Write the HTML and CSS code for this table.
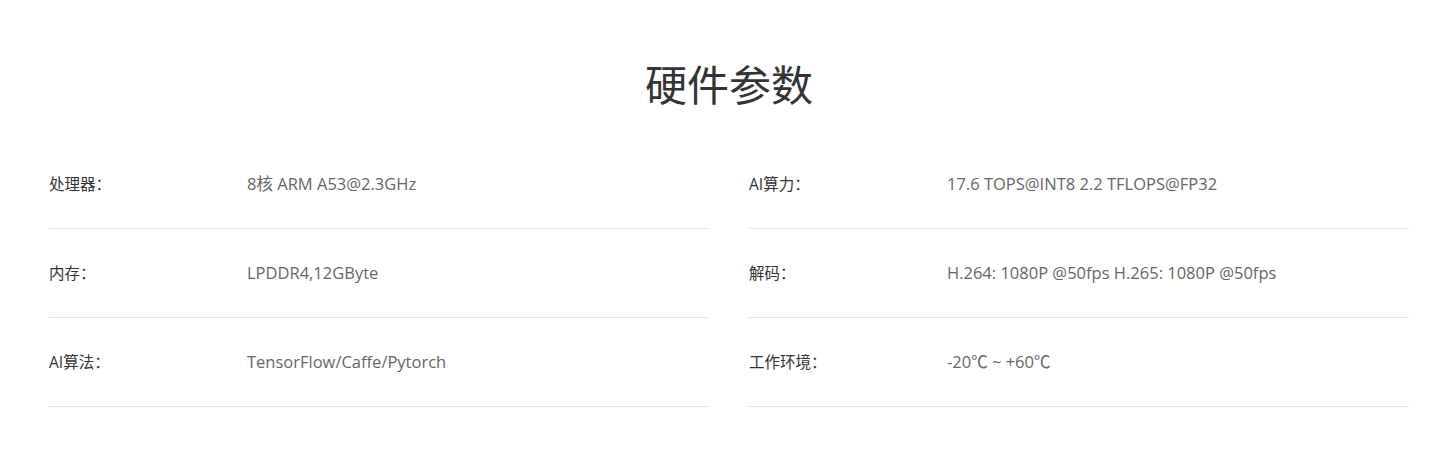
FILE: index.html
```html
<!DOCTYPE html>
<html lang="zh-CN">
<head>
<meta charset="utf-8">
<title>硬件参数</title>
<link rel="stylesheet" href="styles.css">
</head>
<body>
<section class="specs">
  <h2 class="specs-title">硬件参数</h2>
  <div class="specs-grid">
    <div class="spec-row"><span class="spec-label">处理器：</span><span class="spec-value">8核 ARM A53@2.3GHz</span></div>
    <div class="spec-row"><span class="spec-label">AI算力：</span><span class="spec-value">17.6 TOPS@INT8 2.2 TFLOPS@FP32</span></div>
    <div class="spec-row"><span class="spec-label">内存：</span><span class="spec-value">LPDDR4,12GByte</span></div>
    <div class="spec-row"><span class="spec-label">解码：</span><span class="spec-value">H.264: 1080P @50fps H.265: 1080P @50fps</span></div>
    <div class="spec-row"><span class="spec-label">AI算法：</span><span class="spec-value">TensorFlow/Caffe/Pytorch</span></div>
    <div class="spec-row"><span class="spec-label">工作环境：</span><span class="spec-value">-20℃ ~ +60℃</span></div>
  </div>
</section>
</body>
</html>
```

FILE: styles.css
```css
html, body {
  margin: 0;
  padding: 0;
  background: #fff;
}
body {
  font-family: "Open Sans", "Noto Sans CJK SC", sans-serif;
  color: #333;
}
.specs {
  width: 1360px;
  margin-left: 49px;
  padding-top: 53px;
}
.specs-title {
  margin: 0 0 27px;
  text-align: center;
  font-family: "Noto Sans CJK SC", sans-serif;
  font-weight: 400;
  font-size: 42px;
  line-height: 60px;
  color: #333;
}
.specs-grid {
  display: grid;
  grid-template-columns: 1fr 1fr;
  column-gap: 40px;
}
.spec-row {
  display: flex;
  align-items: center;
  height: 89px;
  box-sizing: border-box;
  border-bottom: 1px solid #e3e3e3;
  padding-bottom: 1px;
  font-size: 15.5px;
  line-height: 22px;
}
.spec-label {
  width: 198px;
  flex: none;
  color: #333;
}
.spec-value {
  color: #666;
  font-size: 16.5px;
}
```
